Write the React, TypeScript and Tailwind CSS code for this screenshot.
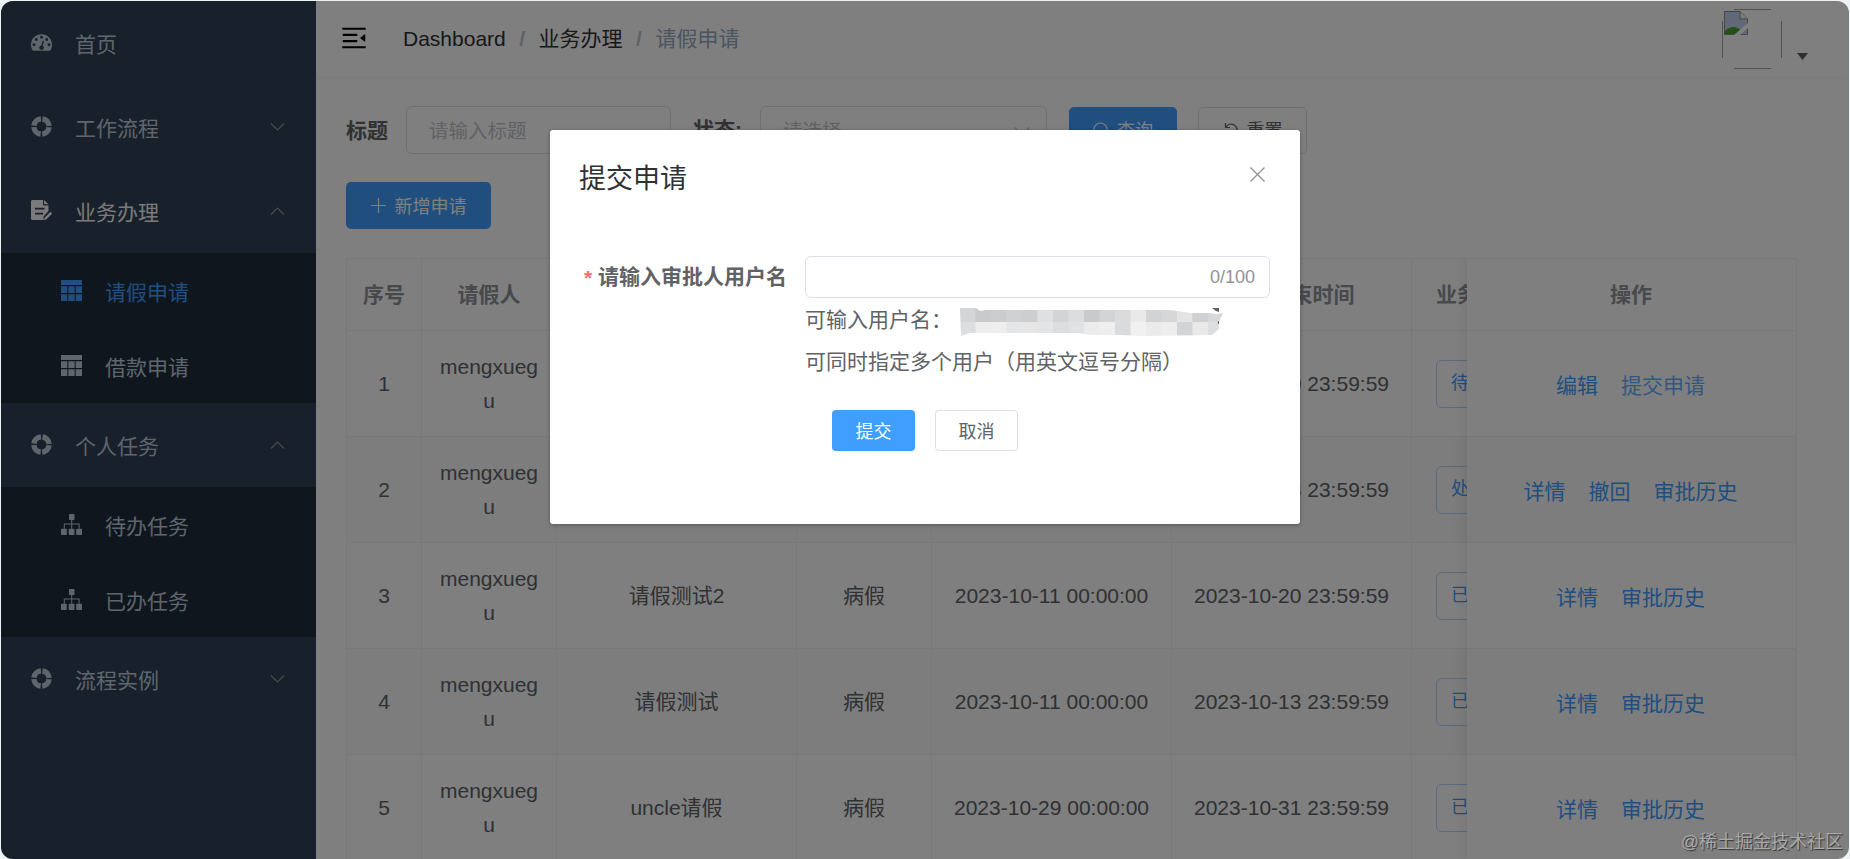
import type { ReactNode } from "react";
import clsx from "clsx";

type IconProps = { className?: string };

const DashboardIcon = ({ className }: IconProps) => (
  <svg viewBox="0 0 128 100" className={className} fill="currentColor">
    <path
      fillRule="evenodd"
      d="M64 0C29 0 0 28.500 0 63.600c0 12.500 3.500 24 10.200 34.400.9 1.300 2.200 2 3.800 2h100c1.600 0 2.900-.7 3.800-2C124.500 87.700 128 76.200 128 63.600 128 28.500 99 0 64 0zM18.300 54.500a9.100 9.100 0 1 1 0 18.200 9.100 9.100 0 0 1 0-18.200zM32 22.700a9.100 9.100 0 1 1 0 18.200 9.100 9.100 0 0 1 0-18.200zM64 9.100a9.100 9.100 0 1 1 0 18.200 9.100 9.100 0 0 1 0-18.200zM96 22.700a9.100 9.100 0 1 1 0 18.200 9.100 9.100 0 0 1 0-18.200zM109.700 54.500a9.100 9.100 0 1 1 0 18.200 9.100 9.100 0 0 1 0-18.200zM77 39.500c1.300.4 2 1.900 1.700 3.400l-7.200 27.200c5 3.300 7.500 8.900 5.900 14.800-1.900 7.300-9.500 11.700-16.800 9.700-7.300-1.900-11.700-9.400-9.700-16.700 1.500-5.800 6.700-9.700 12.400-10.100l7.200-27.200c.5-1.500 2-1.800 3.500-1.400z"
    />
  </svg>
);

const HelpIcon = ({ className }: IconProps) => (
  <svg viewBox="0 0 21 21" className={className} fill="none" stroke="currentColor">
    <circle cx="10.500" cy="10.500" r="7.600" strokeWidth="5.400" strokeDasharray="10.340 1.600" strokeDashoffset="-.8" />
  </svg>
);

const FormIcon = ({ className }: IconProps) => (
  <svg viewBox="0 0 21 21" className={className}>
    <path
      fill="currentColor"
      fillRule="evenodd"
      d="M1.500 0H12v4.500c0 .6.400 1 1 1h4.500V11l-5 5.500V20H1.500C.6 20 0 19.400 0 18.500v-17C0 .6.600 0 1.500 0zM4 7.800v1.800h9.500V7.800zm0 5v1.800h8v-1.800z"
    />
    <path fill="currentColor" d="M13 0l4.500 4.200H13zM19.500 11.800l1.700 1.700-6 6-2.500.8.800-2.500z" />
  </svg>
);

const TableIcon = ({ className }: IconProps) => (
  <svg viewBox="0 0 128 128" className={className} fill="currentColor">
    <path d="M0 0h128v31H0zM0 38h38.400v41.500H0zM0 86.500h38.400V128H0zM44.800 38h38.400v41.500H44.800zM44.800 86.500h38.400V128H44.800zM89.600 38H128v41.500H89.600zM89.600 86.500H128V128H89.600z" />
  </svg>
);

const TreeIcon = ({ className }: IconProps) => (
  <svg viewBox="0 0 21 21" className={className} fill="currentColor">
    <rect x="8" y="0" width="5.500" height="6" rx=".7" />
    <rect x="0" y="14.700" width="5.800" height="6.300" rx=".7" />
    <rect x="7.700" y="14.700" width="5.800" height="6.300" rx=".7" />
    <rect x="15.200" y="14.700" width="5.800" height="6.300" rx=".7" />
    <path d="M10.200 6h1v3.500h7.400v5.200h-1v-4.200h-6.400v4.200h-1v-4.200H3.800v4.200h-1V9.500h7.400z" />
  </svg>
);

const Chevron = ({ className }: IconProps) => (
  <svg viewBox="0 0 14 8" className={className} fill="none" stroke="currentColor" strokeWidth="1.200">
    <path d="M.5.500 7 7l6.500-6.500" />
  </svg>
);

const Hamburger = () => (
  <svg viewBox="0 0 1024 1024" className="size-[30px] rotate-180 text-black" fill="currentColor">
    <path d="M408 442h480c4.400 0 8-3.600 8-8v-56c0-4.400-3.600-8-8-8H408c-4.400 0-8 3.600-8 8v56c0 4.400 3.600 8 8 8zm-8 204c0 4.400 3.600 8 8 8h480c4.400 0 8-3.600 8-8v-56c0-4.400-3.600-8-8-8H408c-4.400 0-8 3.600-8 8v56zm504-486H120c-4.400 0-8 3.600-8 8v56c0 4.400 3.600 8 8 8h784c4.400 0 8-3.600 8-8v-56c0-4.400-3.600-8-8-8zm0 632H120c-4.400 0-8 3.600-8 8v56c0 4.400 3.600 8 8 8h784c4.400 0 8-3.600 8-8v-56c0-4.400-3.600-8-8-8zM142.400 642.100L298.700 519a8.840 8.840 0 0 0 0-13.900L142.400 381.900c-5.800-4.600-14.400-.5-14.400 6.900v246.300a8.900 8.900 0 0 0 14.400 7z" />
  </svg>
);

// avatar whose image failed to load
const Avatar = () => (
  <svg viewBox="0 0 60 60" className="size-[60px]">
    <path d="M12 .500h37M12 59.500h37M.500 12v37M59.500 12v37" stroke="#a5a5a5" />
    <g transform="translate(2 2)">
      <path d="M.5.500H16l7.500 7.500v15.500H.5z" fill="#c3d2f0" stroke="#8c8c8c" />
      <path d="M16 .5V8h7.500" fill="#f4f4f4" stroke="#8c8c8c" />
      <path d="M1 23v-3c3-3 6-4.500 9-4 3 .3 5 1.500 7 4l-4 3z" fill="#4aa32c" />
      <path d="M10 24 24 12v5l-8 7z" fill="#fff" />
    </g>
  </svg>
);

type MenuItemProps = {
  icon: ReactNode;
  title: string;
  arrow?: "up" | "down";
  active?: boolean;
};

function MenuItem({ icon, title, arrow, active }: MenuItemProps) {
  return (
    <div
      className={clsx(
        "flex h-[84px] items-center pb-px pl-[30px] pr-[31px]",
        active ? "text-[#f4f4f5]" : "text-[#bfcbd9]"
      )}
    >
      {icon}
      <span className="ml-[23px] mt-[3px]">{title}</span>
      {arrow && (
        <Chevron className={clsx("ml-auto h-2 w-[15px] text-[#909399]", arrow === "up" && "rotate-180")} />
      )}
    </div>
  );
}

function SubMenuItem({ icon, title, active }: MenuItemProps) {
  return (
    <div
      className={clsx(
        "flex h-[75px] items-center bg-[#1f2d3d] pl-[60px]",
        active ? "text-[#409eff]" : "text-[#bfcbd9]"
      )}
    >
      {icon}
      <span className="ml-[23px] mt-[3px]">{title}</span>
    </div>
  );
}

const Sidebar = () => (
  <aside className="h-full w-[315px] shrink-0 bg-[#304156]">
    <MenuItem icon={<DashboardIcon className="h-[17px] w-[21px]" />} title="首页" />
    <MenuItem icon={<HelpIcon className="size-[21px]" />} title="工作流程" arrow="down" />
    <MenuItem icon={<FormIcon className="size-[21px]" />} title="业务办理" arrow="up" active />
    <SubMenuItem icon={<TableIcon className="size-[21px]" />} title="请假申请" active />
    <SubMenuItem icon={<TableIcon className="size-[21px]" />} title="借款申请" />
    <MenuItem icon={<HelpIcon className="size-[21px]" />} title="个人任务" arrow="up" />
    <SubMenuItem icon={<TreeIcon className="size-[21px]" />} title="待办任务" />
    <SubMenuItem icon={<TreeIcon className="size-[21px]" />} title="已办任务" />
    <MenuItem icon={<HelpIcon className="size-[21px]" />} title="流程实例" arrow="down" />
  </aside>
);

const Navbar = () => (
  <header className="flex h-[76px] items-start shadow-[0_1px_4px_rgba(0,21,41,0.05)]">
    <div className="flex h-[74px] items-center pl-[23px]">
      <Hamburger />
      <div className="ml-[34px] flex items-center text-[#303133]">
        <span>Dashboard</span>
        <span className="mx-[13.500px] font-bold text-[#c0c4cc]">/</span>
        <span>业务办理</span>
        <span className="mx-[13.500px] font-bold text-[#c0c4cc]">/</span>
        <span className="text-[#97a8be]">请假申请</span>
      </div>
    </div>
    <div className="ml-auto mr-[41px] mt-2 flex items-end">
      <Avatar />
      <svg viewBox="0 0 11 7" className="mb-[9px] ml-[15px] h-[7px] w-[11px]" fill="#5a5e66">
        <path d="M0 0h11L5.500 7z" />
      </svg>
    </div>
  </header>
);

const FilterBar = () => (
  <div className="flex items-center">
    <span className="font-bold">标题</span>
    <div className="ml-[18px] flex h-12 w-[265px] items-center rounded-md border border-[#dcdfe6] pl-[22px] pt-[2px] text-[19.5px] text-[#c0c4cc]">
      请输入标题
    </div>
    <span className="-mt-px ml-[22px] w-12 whitespace-nowrap font-bold">状态:</span>
    <div className="ml-[19px] flex h-12 w-[287px] items-center rounded-md border border-[#dcdfe6] pl-[22px] pr-4 pt-[2px] text-[19.5px] text-[#c0c4cc]">
      请选择
      <Chevron className="ml-auto h-[9px] w-4" />
    </div>
    <button className="ml-[22px] flex h-[47px] w-[108px] items-center justify-center gap-2 rounded-[5px] bg-[#409eff] text-[18px] text-white">
      <svg viewBox="0 0 16 16" className="size-4" fill="none" stroke="currentColor" strokeWidth="1.200">
        <circle cx="7.500" cy="7.500" r="6.500" />
        <path d="m12 12 3.500 3.500" />
      </svg>
      <span className="mt-[3px]">查询</span>
    </button>
    <button className="ml-[21px] flex h-[47px] w-[109px] items-center justify-center gap-2 rounded-[5px] border border-[#dcdfe6] text-[18px]">
      <svg viewBox="0 0 16 16" className="size-4" fill="none" stroke="currentColor" strokeWidth="1.200">
        <path d="M2.500 1v4.500H7M2.800 5.300a6 6 0 1 1 1.500 7.400" />
      </svg>
      <span className="mt-[3px]">重置</span>
    </button>
  </div>
);

const rows = [
  { title: "请假测试4", type: "病假", start: "2023-10-11 00:00:00", end: "2023-10-20 23:59:59", status: "待提交", actions: ["编辑", "提交申请"] },
  { title: "请假测试3", type: "病假", start: "2023-10-11 00:00:00", end: "2023-10-13 23:59:59", status: "处理中", actions: ["详情", "撤回", "审批历史"] },
  { title: "请假测试2", type: "病假", start: "2023-10-11 00:00:00", end: "2023-10-20 23:59:59", status: "已完成", actions: ["详情", "审批历史"] },
  { title: "请假测试", type: "病假", start: "2023-10-11 00:00:00", end: "2023-10-13 23:59:59", status: "已完成", actions: ["详情", "审批历史"] },
  { title: "uncle请假", type: "病假", start: "2023-10-29 00:00:00", end: "2023-10-31 23:59:59", status: "已完成", actions: ["详情", "审批历史"] },
];

const cell = "flex items-center justify-center border-r border-b border-[#eef0f4] text-center";
const columns = "grid w-[1120px] shrink-0 grid-cols-[75px_135px_240px_135px_240px_240px_55px] overflow-hidden";

const DataTable = () => (
  <div className="mt-[29px] flex w-[1451px] overflow-hidden border-l border-t border-[#eef0f4]">
    <div>
      <div className={clsx(columns, "h-[72px] font-bold text-[#909399]")}>
        {["序号", "请假人", "标题", "请假类型", "请假开始时间", "请假结束时间"].map((name) => (
          <div key={name} className={cell}>{name}</div>
        ))}
        <div className="flex items-center border-b border-[#eef0f4] pl-6 whitespace-nowrap">业务状态</div>
      </div>
      {rows.map((row, i) => (
        <div key={i} className={clsx(columns, "h-[106px]", i % 2 === 1 && "bg-[#fafafa]")}>
          <div className={cell}>{i + 1}</div>
          <div className={clsx(cell, "break-all px-[15px] leading-[34px]")}>mengxuegu</div>
          <div className={cell}>{row.title}</div>
          <div className={cell}>{row.type}</div>
          <div className={cell}>{row.start}</div>
          <div className={cell}>{row.end}</div>
          <div className="flex items-center border-b border-[#eef0f4] pl-6">
            <span className="flex h-12 shrink-0 items-center rounded-md border border-[#b3d8ff] px-[14px] text-[18px] text-[#409eff]">
              {row.status}
            </span>
          </div>
        </div>
      ))}
    </div>
    <div className="w-[330px] border-r border-[#eef0f4] bg-white shadow-[0_0_15px_rgba(0,0,0,0.12)]">
      <div className="flex h-[72px] items-center justify-center border-b border-[#eef0f4] pr-px font-bold text-[#909399]">
        操作
      </div>
      {rows.map((row, i) => (
        <div
          key={i}
          className={clsx(
            "flex h-[106px] items-center justify-center gap-[23px] border-b border-[#eef0f4] pr-[2px] pt-1",
            i % 2 === 1 && "bg-[#fafafa]"
          )}
        >
          {row.actions.map((action) => (
            <a key={action} className={action === "提交申请" ? "text-[#66b1ff]" : "text-[#409eff]"}>
              {action}
            </a>
          ))}
        </div>
      ))}
    </div>
  </div>
);

// pixelated strip that hides the account names
const mosaic = [
  ["#d4d5d6", "#c9cacb", "#cbccce", "#d0d1d2", "#cdcecf", "#dfe0e1", "#d3d4d5", "#dcddde", "#c9cacc", "#d3d4d5", "#dadbdc", "#e9e9ea", "#d2d3d4", "#d6d7d8", "#e4e4e5", "#cfd0d2", "#d7d8d9"],
  ["#dddedf", "#ededee", "#eeeeef", "#e4e5e6", "#e6e6e7", "#e3e4e5", "#dcddde", "#e1e2e3", "#ececed", "#eeeeef", "#dadbdd", "#f1f1f1", "#ebebec", "#eeeeee", "#d3d4d6", "#e9e9ea", "#dddedf"],
];

const Mosaic = () => (
  <svg viewBox="0 0 263 28" className="ml-5 mt-1 h-7 w-[263px]">
    <clipPath id="smudge">
      <path d="M0 0h16l4 3 6-1h184l20 3h20l6 1 7-1-4 9v7l-7 6-70 1-20-1H130l-12-2H10l-9 3z" />
    </clipPath>
    <g clipPath="url(#smudge)">
      {mosaic.map((line, y) =>
        line.map((fill, x) => (
          <rect key={`${x}-${y}`} x={x * 15.5} y={y * 14} width="16" height="14.500" fill={fill} />
        ))
      )}
    </g>
    <path d="M252 0h7v4l-3-1zM258 13h1v3h-1z" fill="#606266" />
  </svg>
);

const SubmitDialog = () => (
  <div className="absolute left-[549px] top-[129px] h-[394px] w-[750px] rounded-[3px] bg-white shadow-[0_1px_4px_rgba(0,0,0,0.3)]">
    <div className="flex items-center justify-between pl-[29px] pr-[35px] pt-[29px]">
      <h2 className="text-[27px] leading-[40px] text-[#303133]">提交申请</h2>
      <svg viewBox="0 0 15 15" className="-mt-[10px] size-[15px]" fill="none" stroke="#909399" strokeWidth="1.400">
        <path d="m.5.500 14 14m0-14-14 14" />
      </svg>
    </div>
    <div className="mt-[57px] flex items-center pl-[34px]">
      <span className="w-[14px] font-bold text-[#f56c6c]">*</span>
      <span className="-mt-[2px] w-[207px] font-bold">请输入审批人用户名</span>
      <div className="flex h-[42px] w-[465px] items-center justify-end rounded-md border border-[#dcdfe6] pr-[14px] text-[18px] text-[#909399]">
        0/100
      </div>
    </div>
    <div className="pl-[255px] pt-px leading-[42px]">
      <div className="flex h-[42px] items-center whitespace-nowrap">
        <span className="w-[135px]">可输入用户名：</span>
        <Mosaic />
      </div>
      <p>可同时指定多个用户（用英文逗号分隔）</p>
    </div>
    <div className="mt-[27px] flex gap-5 pl-[282px] text-[18px]">
      <button className="h-[41px] w-[83px] rounded-[4px] bg-[#409eff] pt-[3px] text-white">提交</button>
      <button className="h-[41px] w-[83px] rounded-[4px] border border-[#dcdfe6] pt-[3px]">取消</button>
    </div>
  </div>
);

export default function App() {
  return (
    <div className="h-[859px] w-[1850px] overflow-hidden bg-[#edf2f5] pl-px pt-px font-['Liberation_Sans','Noto_Sans_CJK_SC',sans-serif] text-[21px] leading-[31px] text-[#606266]">
      <div className="relative flex h-[858px] w-[1848px] overflow-hidden rounded-[12px] bg-white">
        <Sidebar />
        <main className="w-[1533px]">
          <Navbar />
          <div className="px-[30px] pt-[29px]">
            <FilterBar />
            <button className="mt-7 flex h-[47px] w-[145px] items-center justify-center gap-[9px] rounded-[5px] bg-[#409eff] text-[18px] text-white">
              <svg viewBox="0 0 15 15" className="size-[15px]" stroke="currentColor" strokeWidth="1.200">
                <path d="M7.500 0v15M0 7.500h15" />
              </svg>
              <span className="mt-[3px]">新增申请</span>
            </button>
            <DataTable />
          </div>
        </main>
        <div className="absolute inset-0 bg-black/50" />
        <SubmitDialog />
        <span className="absolute bottom-px right-[6px] text-[18px] text-[#a9a9a9] [text-shadow:1px_1px_1px_#333]">
          @稀土掘金技术社区
        </span>
      </div>
    </div>
  );
}
